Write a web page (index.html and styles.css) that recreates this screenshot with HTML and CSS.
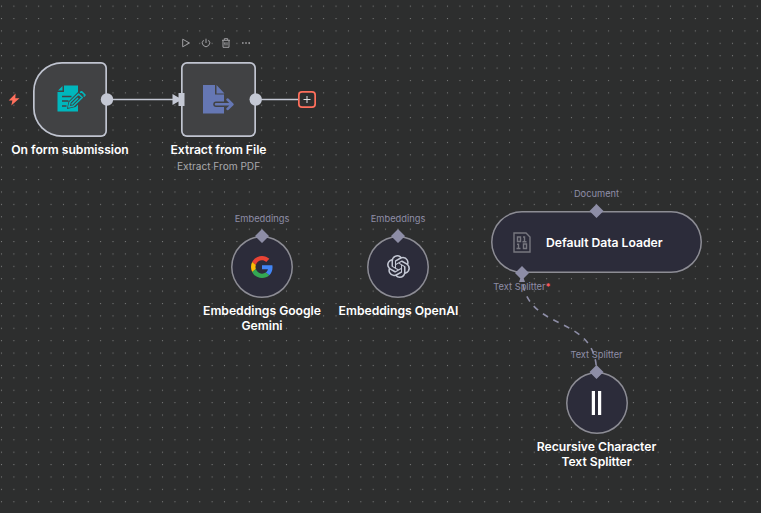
FILE: index.html
```
<!DOCTYPE html>
<html lang="en">
<head>
<meta charset="utf-8">
<title>Workflow canvas</title>
<link rel="stylesheet" href="styles.css">
</head>
<body>
<main class="canvas">
  <svg class="layer" width="761" height="513">
    <defs>
      <pattern id="dots" x="-4.7" y="-.1" width="12.39" height="12.39" patternUnits="userSpaceOnUse">
        <circle cx="6.2" cy="6.2" r=".6" class="dot"/>
      </pattern>
    </defs>
    <rect width="761" height="513" fill="url(#dots)"/>
    <path class="edge" d="M107 99.5H174M256 99.5H299"/>
    <path class="edge-dashed" d="M522 273C522 335 596.5 311 596.5 372"/>
  </svg>

  <svg class="bolt" width="12" height="13" viewBox="0 0 12 13"><path d="M7.6.5.7 7.6h3.7L3.3 12.500 11.500 5.200H7.300Z"/></svg>

  <section class="node trigger">
    <svg width="30" height="28" viewBox="0 0 30 28">
      <path fill="#00b7bd" d="M7 .5H21V26.500H.5V7H7ZM5.500 1V5.500H1Z"/>
      <path d="M5 11.500H14.500M5 16H11.500M5 21H9.500" stroke="#414244" stroke-width="1.5"/>
      <path fill="#414244" d="M10 24 11.500 16.500 21 7 24 4.500 30 11 18.500 22Z"/>
      <path fill="none" stroke="#00b7bd" stroke-width="1.6" stroke-linejoin="round" d="M11.800 22 13 17.300 21.500 9 25.200 12.500 16.500 21ZM14.500 19.500 21 13M23 7.700 24.500 6.700 28 10 26.700 11.500"/>
    </svg>
  </section>
  <h2 class="title t-form">On form submission</h2>

  <div class="toolbar">
    <svg viewBox="0 0 10 10"><path d="M1.700 1.200V8.800L8.500 5Z"/></svg>
    <svg viewBox="0 0 10 10"><path d="M5 .7V5M2.500 2.200A3.700 3.700 0 1 0 7.500 2.200"/></svg>
    <svg viewBox="0 0 10 10"><path d="M1 2.300H9M3.300 2V.7H6.700V2M2 2.500V9.300H8V2.500M4 4.200V7.500M6 4.200V7.500"/></svg>
    <svg viewBox="0 0 10 10"><path class="ellipsis" d="M1 5H2.600M4.200 5H5.800M7.400 5H9"/></svg>
  </div>
  <section class="node extract">
    <svg width="32" height="29" viewBox="0 0 32 29">
      <path fill="#6577b4" d="M0 0H12V9.500H21V28.500H0ZM13.500 0 21.500 8.500H13.500Z"/>
      <path class="export-gap" d="M13 19.300H24"/>
      <path class="export-arrow" d="M13 19.300H29M24.500 14.500 29.500 19.300 24.500 24"/>
    </svg>
  </section>
  <h2 class="title t-extract">Extract from File</h2>
  <p class="subtitle">Extract From PDF</p>
  <button class="add" aria-label="Add node"></button>

  <section class="node round gemini">
    <svg width="22" height="22" viewBox="0 0 48 48">
      <path fill="#ea4335" d="M24 9.500c3.540 0 6.710 1.220 9.210 3.600l6.850-6.850C35.900 2.380 30.470 0 24 0 14.620 0 6.510 5.380 2.560 13.220l7.980 6.190C12.430 13.720 17.740 9.500 24 9.500z"/>
      <path fill="#4285f4" d="M46.980 24.550c0-1.570-.15-3.090-.38-4.550H24v9.020h12.940c-.58 2.960-2.260 5.480-4.780 7.180l7.730 6c4.510-4.180 7.090-10.360 7.090-17.650z"/>
      <path fill="#fbbc05" d="M10.530 28.590c-.48-1.450-.76-2.990-.76-4.590s.27-3.140.76-4.590l-7.980-6.190C.92 16.460 0 20.120 0 24s.92 7.540 2.560 10.780l7.970-6.190z"/>
      <path fill="#34a853" d="M24 48c6.480 0 11.930-2.130 15.890-5.810l-7.730-6c-2.150 1.450-4.920 2.300-8.160 2.300-6.260 0-11.570-4.220-13.470-9.910l-7.980 6.190C6.510 42.620 14.620 48 24 48z"/>
    </svg>
  </section>
  <span class="port-label l-gemini">Embeddings</span>
  <h2 class="title t-gemini">Embeddings Google<br>Gemini</h2>

  <section class="node round openai">
    <svg width="23" height="23" viewBox="0 0 24 24"><path fill="#c4c8d4" d="M22.282 9.821a5.985 5.985 0 0 0-.516-4.910 6.046 6.046 0 0 0-6.510-2.900A6.065 6.065 0 0 0 4.981 4.180a5.985 5.985 0 0 0-3.998 2.900 6.046 6.046 0 0 0 .743 7.097 5.980 5.980 0 0 0 .510 4.911 6.051 6.051 0 0 0 6.515 2.900A5.985 5.985 0 0 0 13.260 24a6.056 6.056 0 0 0 5.772-4.206 5.990 5.990 0 0 0 3.998-2.900 6.056 6.056 0 0 0-.748-7.073zM13.260 22.430a4.476 4.476 0 0 1-2.876-1.040l.141-.081 4.779-2.758a.795.795 0 0 0 .392-.681v-6.737l2.020 1.169a.071.071 0 0 1 .038.052v5.582a4.504 4.504 0 0 1-4.494 4.494zM3.600 18.304a4.470 4.470 0 0 1-.535-3.014l.142.085 4.783 2.759a.771.771 0 0 0 .780 0l5.843-3.369v2.332a.080.080 0 0 1-.033.062L9.740 19.950a4.500 4.500 0 0 1-6.140-1.646zM2.340 7.896a4.485 4.485 0 0 1 2.366-1.973V11.600a.766.766 0 0 0 .388.677l5.815 3.354-2.020 1.169a.076.076 0 0 1-.071 0l-4.830-2.787A4.504 4.504 0 0 1 2.340 7.872zm16.597 3.855-5.833-3.387L15.119 7.200a.076.076 0 0 1 .071 0l4.830 2.791a4.494 4.494 0 0 1-.676 8.105v-5.678a.790.790 0 0 0-.407-.667zm2.010-3.023-.141-.085-4.774-2.782a.776.776 0 0 0-.785 0L9.409 9.230V6.897a.066.066 0 0 1 .028-.061l4.830-2.787a4.500 4.500 0 0 1 6.680 4.660zM8.307 12.863l-2.020-1.164a.080.080 0 0 1-.038-.057V6.075a4.500 4.500 0 0 1 7.375-3.453l-.142.080-4.778 2.758a.795.795 0 0 0-.393.681zm1.097-2.365 2.602-1.500 2.607 1.500v2.999l-2.597 1.500-2.607-1.500z"/></svg>
  </section>
  <span class="port-label l-openai">Embeddings</span>
  <h2 class="title t-openai">Embeddings OpenAI</h2>

  <section class="node loader">
    <svg width="18" height="21" viewBox="0 0 18 21"><path d="M1 1H13L17 5V20H1ZM4.500 5H7.500V9.500H4.500ZM10 5H11.500V9.500M9.500 9.700H13.500M4 12.200H5.500V16.500M3.500 16.500H7.500M10.500 12H13.500V16.500H10.500Z"/></svg>
    <h2>Default Data Loader</h2>
  </section>
  <span class="port-label l-document">Document</span>
  <span class="port-label l-split-out">Text Splitter<b>*</b></span>

  <section class="node round recursive">
    <svg width="11" height="24" viewBox="0 0 11 24"><path fill="#fff" d="M.8 0H4V24H.8ZM7 0H10.200V24H7Z"/></svg>
  </section>
  <span class="port-label l-split-in">Text Splitter</span>
  <h2 class="title t-recursive">Recursive Character<br>Text Splitter</h2>

  <svg class="layer" width="761" height="513">
    <g class="main-port">
      <circle cx="107" cy="99.500" r="6.200"/>
      <circle cx="255.700" cy="99.500" r="6.200"/>
      <path d="M172.500 94 178.500 97.500V93H184.500V106H178.500V101.500L172.500 105Z"/>
    </g>
    <path class="diamond" d="M262 229l7 7-7 7-7-7ZM398 229l7 7-7 7-7-7ZM596.500 204l7 7-7 7-7-7ZM522 266l7 7-7 7-7-7ZM596.500 365l7 7-7 7-7-7Z"/>
    <path class="diamond" d="M520.500 278h3l1.500 4h-6Z"/>
    <path class="plus" d="M303.500 99.500H310.500M307 96V103"/>
  </svg>
</main>
</body>
</html>
```
FILE: styles.css
```
* { box-sizing: border-box; }
body { margin: 0; background: #2d2e2e; font-family: Inter, "Open Sans", sans-serif; }
h2, p { margin: 0; }
.canvas { position: relative; width: 761px; height: 513px; overflow: hidden; background: #2d2e2e; }
.layer { position: absolute; left: 0; top: 0; pointer-events: none; }
.dot { fill: #858686; }
.edge { fill: none; stroke: #c4c8d4; stroke-width: 1.5; }
.edge-dashed { fill: none; stroke: #8d8da6; stroke-width: 1.6; stroke-dasharray: 6 6; }

.node { position: absolute; display: flex; align-items: center; justify-content: center; }
.trigger, .extract { top: 62px; width: 74.5px; height: 74.5px; background: #414244; box-shadow: inset 0 0 0 1.7px #c0c4d0; }
.trigger { left: 32.5px; border-radius: 29px 6px 6px 29px; }
.trigger svg { margin-left: 4px; }
.extract { left: 181px; border-radius: 6px; }
.extract svg { margin-left: 1px; }
.export-gap { fill: none; stroke: #414244; stroke-width: 5.5px; stroke-linecap: round; }
.export-arrow { fill: none; stroke: #6577b4; stroke-width: 2.5px; stroke-linecap: round; stroke-linejoin: round; }
.round, .loader { background: #2c2c3a; box-shadow: inset 0 0 0 1.5px #8d8d94; }
.round { width: 62px; height: 62px; border-radius: 50%; }
.gemini { left: 231px; top: 235.5px; }
.openai { left: 367px; top: 235.5px; }
.recursive { left: 565.5px; top: 372px; }
.loader { left: 491px; top: 211px; width: 210.5px; height: 62px; justify-content: flex-start; gap: 15px; padding-left: 22px; border-radius: 31px; }
.loader path { fill: none; stroke: #77777f; stroke-width: 1.4; }
.loader h2, .title { color: #fff; font-size: 12.2px; font-weight: 600; line-height: 15px; letter-spacing: -.03px; white-space: nowrap; }
.title { position: absolute; text-align: center; transform: translateX(-50%); }
.t-form { left: 70px; top: 142px; }
.t-extract { left: 218.5px; top: 142px; }
.t-gemini { left: 262px; top: 303px; }
.t-openai { left: 398.5px; top: 303px; }
.t-recursive { left: 596.5px; top: 439px; }
.subtitle { position: absolute; left: 218.5px; top: 160px; transform: translateX(-50%); color: #a8a8ab; font-size: 10.1px; line-height: 13px; white-space: nowrap; }
.port-label { position: absolute; transform: translateX(-50%); color: #8d8da6; font-size: 9.3px; line-height: 12px; white-space: nowrap; }
.port-label b { color: #ff5a5f; }
.l-gemini { left: 262px; top: 213px; }
.l-openai { left: 398px; top: 213px; }
.l-document { left: 596.5px; top: 188px; }
.l-split-out { left: 522px; top: 281px; }
.l-split-in { left: 596.5px; top: 349px; }

.bolt { position: absolute; left: 8px; top: 93px; fill: #ff6f5c; }
.toolbar { position: absolute; left: 180.5px; top: 38px; display: flex; gap: 10px; }
.toolbar svg { width: 10px; height: 10px; fill: none; stroke: #a0a0a3; stroke-width: 1; }
.toolbar .ellipsis { stroke-width: 1.6; }
.add { position: absolute; left: 298px; top: 91px; width: 17.5px; height: 17px; padding: 0; border: 0; box-shadow: inset 0 0 0 1.7px #ff6f5c; border-radius: 4px; background: #2d2e2e; }
.plus { fill: none; stroke: #dcdce0; stroke-width: 1; }
.main-port { fill: #c4c8d4; }
.diamond { fill: #8d8da6; }
```
